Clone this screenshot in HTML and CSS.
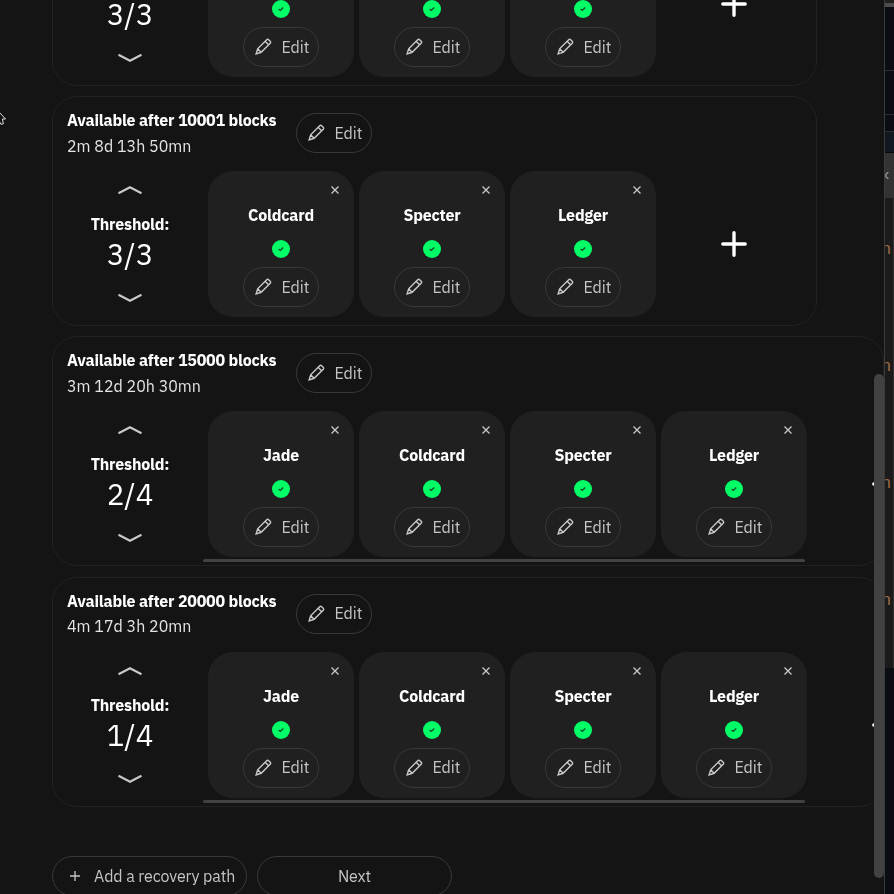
FILE: index.html
```
<!DOCTYPE html>
<html lang="en">
<head>
<meta charset="utf-8">
<title>Recovery paths</title>
<link rel="stylesheet" href="styles.css">
</head>
<body>
<svg class="defs" width="0" height="0">
  <symbol id="pencil" viewBox="0 0 18 18"><path d="M1.200 16.800 2.800 11.400 12.400 1.800q1-1 2 0l1.700 1.700q1 1 0 2L6.500 15.100ZM2.800 11.400 6.500 15.100M10.700 3.500l3.700 3.700"/></symbol>
  <symbol id="up" viewBox="0 0 26 10"><path d="M1.500 8.200 13 2.200 24.500 8.200"/></symbol>
  <symbol id="down" viewBox="0 0 26 10"><path d="M1.500 1.800 13 7.800 24.500 1.800"/></symbol>
  <symbol id="close" viewBox="0 0 10 10"><path d="M1.500 1.500 8.500 8.500M8.500 1.500 1.500 8.500"/></symbol>
  <symbol id="check" viewBox="0 0 18 18"><path d="M6.600 9 8.300 10.300 11.300 7.600"/></symbol>
  <symbol id="plus" viewBox="0 0 26 26"><path d="M13 1.800V24.200M1.800 13H24.200"/></symbol>
</svg>
<div class="screen">
  <main class="window">
    <div class="paths">
      <section class="path">
        <header class="head"></header>
        <div class="row">
          <div class="threshold"><svg></svg><b></b><span>3/3</span><svg><use href="#down"/></svg></div>
          <div class="keys">
            <article class="key"><h3></h3><svg class="ok"><use href="#check"/></svg><button class="btn"><svg><use href="#pencil"/></svg><span>Edit</span></button></article>
            <article class="key"><h3></h3><svg class="ok"><use href="#check"/></svg><button class="btn"><svg><use href="#pencil"/></svg><span>Edit</span></button></article>
            <article class="key"><h3></h3><svg class="ok"><use href="#check"/></svg><button class="btn"><svg><use href="#pencil"/></svg><span>Edit</span></button></article>
            <div class="add"><svg><use href="#plus"/></svg></div>
          </div>
        </div>
      </section>
      <section class="path">
        <header class="head"><div class="info"><h2>Available after 10001 blocks</h2><p>2m 8d 13h 50mn</p></div><button class="btn"><svg><use href="#pencil"/></svg><span>Edit</span></button></header>
        <div class="row">
          <div class="threshold"><svg><use href="#up"/></svg><b>Threshold:</b><span>3/3</span><svg><use href="#down"/></svg></div>
          <div class="keys">
            <article class="key"><svg class="close"><use href="#close"/></svg><h3>Coldcard</h3><svg class="ok"><use href="#check"/></svg><button class="btn"><svg><use href="#pencil"/></svg><span>Edit</span></button></article>
            <article class="key"><svg class="close"><use href="#close"/></svg><h3>Specter</h3><svg class="ok"><use href="#check"/></svg><button class="btn"><svg><use href="#pencil"/></svg><span>Edit</span></button></article>
            <article class="key"><svg class="close"><use href="#close"/></svg><h3>Ledger</h3><svg class="ok"><use href="#check"/></svg><button class="btn"><svg><use href="#pencil"/></svg><span>Edit</span></button></article>
            <div class="add"><svg><use href="#plus"/></svg></div>
          </div>
        </div>
      </section>
      <section class="path wide">
        <header class="head"><div class="info"><h2>Available after 15000 blocks</h2><p>3m 12d 20h 30mn</p></div><button class="btn"><svg><use href="#pencil"/></svg><span>Edit</span></button></header>
        <div class="row">
          <div class="threshold"><svg><use href="#up"/></svg><b>Threshold:</b><span>2/4</span><svg><use href="#down"/></svg></div>
          <div class="keys">
            <article class="key"><svg class="close"><use href="#close"/></svg><h3>Jade</h3><svg class="ok"><use href="#check"/></svg><button class="btn"><svg><use href="#pencil"/></svg><span>Edit</span></button></article>
            <article class="key"><svg class="close"><use href="#close"/></svg><h3>Coldcard</h3><svg class="ok"><use href="#check"/></svg><button class="btn"><svg><use href="#pencil"/></svg><span>Edit</span></button></article>
            <article class="key"><svg class="close"><use href="#close"/></svg><h3>Specter</h3><svg class="ok"><use href="#check"/></svg><button class="btn"><svg><use href="#pencil"/></svg><span>Edit</span></button></article>
            <article class="key"><svg class="close"><use href="#close"/></svg><h3>Ledger</h3><svg class="ok"><use href="#check"/></svg><button class="btn"><svg><use href="#pencil"/></svg><span>Edit</span></button></article>
            <div class="add"><svg><use href="#plus"/></svg></div>
          </div>
        </div>
        <div class="hscroll"></div>
      </section>
      <section class="path wide">
        <header class="head"><div class="info"><h2>Available after 20000 blocks</h2><p>4m 17d 3h 20mn</p></div><button class="btn"><svg><use href="#pencil"/></svg><span>Edit</span></button></header>
        <div class="row">
          <div class="threshold"><svg><use href="#up"/></svg><b>Threshold:</b><span>1/4</span><svg><use href="#down"/></svg></div>
          <div class="keys">
            <article class="key"><svg class="close"><use href="#close"/></svg><h3>Jade</h3><svg class="ok"><use href="#check"/></svg><button class="btn"><svg><use href="#pencil"/></svg><span>Edit</span></button></article>
            <article class="key"><svg class="close"><use href="#close"/></svg><h3>Coldcard</h3><svg class="ok"><use href="#check"/></svg><button class="btn"><svg><use href="#pencil"/></svg><span>Edit</span></button></article>
            <article class="key"><svg class="close"><use href="#close"/></svg><h3>Specter</h3><svg class="ok"><use href="#check"/></svg><button class="btn"><svg><use href="#pencil"/></svg><span>Edit</span></button></article>
            <article class="key"><svg class="close"><use href="#close"/></svg><h3>Ledger</h3><svg class="ok"><use href="#check"/></svg><button class="btn"><svg><use href="#pencil"/></svg><span>Edit</span></button></article>
            <div class="add"><svg><use href="#plus"/></svg></div>
          </div>
        </div>
        <div class="hscroll"></div>
      </section>
    </div>
    <footer class="actions">
      <button class="btn large"><svg class="small-plus"><use href="#close"/></svg><span>Add a recovery path</span></button>
      <button class="btn large next"><span>Next</span></button>
    </footer>
    <div class="vscroll"></div>
    <svg class="cursor" viewBox="0 0 6 16"><path d="M0 2 5.500 8H2.500L3.300 12.800 1 13.300-.5 10.500"/></svg>
  </main>
  <aside class="behind">
    <div class="edge"></div>
    <div class="pane p1"></div>
    <div class="pane p2"></div>
    <div class="pane p3"></div>
    <div class="pane p4"></div>
    <div class="tab"><svg viewBox="0 0 6 10"><path d="M4 1 1 3.500V6.500L4 9"/></svg></div>
    <div class="terminal"><span>n</span><span>n</span><span>n</span><span>n</span></div>
    <div class="pane last"></div>
  </aside>
</div>
</body>
</html>
```
FILE: styles.css
```
* { box-sizing: border-box; }
body { margin: 0; background: #141414; color: #fff; font-family: "IBM Plex Sans", "Noto Sans", sans-serif; font-size: 16px; overflow: hidden; }
h2, h3, p { margin: 0; font-size: 16px; white-space: nowrap; }
svg { display: block; flex: none; fill: none; stroke: #c8c8c8; stroke-width: 1.5; overflow: visible; }
.defs { position: absolute; }
.screen { display: flex; width: 894px; height: 894px; overflow: hidden; }
.window { position: relative; width: 885px; height: 894px; flex: none; overflow: hidden; border-right: 1px solid #3b3b3b; }
.paths { display: flex; flex-direction: column; gap: 10.200px; margin: -144px 0 0 52px; will-change: transform; }
.path { width: 765px; height: 230px; flex: none; border: 1px solid #222; border-radius: 25px; padding: 14px 0 0 14px; }
.path.wide { width: 832px; }
.head { display: flex; gap: 20px; height: 60px; }
.info { width: 209px; margin-top: -1px; }
.info h2, .info p { height: 25.500px; line-height: 20px; }
.info h2 { letter-spacing: -.2px; }
.info p { color: #e4e4e4; }
.btn { display: flex; align-items: center; width: 76px; height: 40px; border: 1px solid #393939; border-radius: 20px; padding: 0 0 0 10.500px; background: transparent; color: #c4c4c4; font: 16px "IBM Plex Sans", "Noto Sans", sans-serif; white-space: nowrap; }
.btn svg { width: 17px; height: 17px; stroke-width: 1.500; margin: 0 10px 1px 0; }
.btn span { letter-spacing: -.1px; margin-top: -1px; }
.head .btn { margin-top: 2px; }
.row { display: flex; }
.threshold { width: 126px; height: 146px; display: flex; flex-direction: column; align-items: center; padding-top: 14px; flex: none; }
.threshold svg { width: 26px; height: 10px; stroke-width: 2.100; }
.threshold b { height: 20px; font-size: 16px; line-height: 20px; letter-spacing: -.2px; margin-top: 19px; }
.threshold span { font-size: 29.500px; line-height: 36px; margin: 2px 0 21px; }
.keys { display: flex; gap: 5px; margin-left: 15px; }
.key { position: relative; width: 146px; height: 146px; flex: none; background: #202020; border-radius: 25px; display: flex; flex-direction: column; align-items: center; padding-top: 34px; }
.key h3 { height: 20px; line-height: 20px; letter-spacing: -.2px; }
.key .close { position: absolute; top: 14px; right: 14.500px; width: 10px; height: 10px; stroke-width: 1.300; }
.ok { width: 18px; height: 18px; margin: 15px 0 9px; background: #00ff66; border-radius: 9px; stroke: #134f2b; stroke-width: 1.300; }
.add { width: 146px; height: 146px; display: grid; place-items: center; flex: none; }
.add svg { width: 26px; height: 26px; stroke: #fff; stroke-width: 3.400; stroke-linecap: round; }
.hscroll { width: 602px; height: 3px; margin: 2px 0 0 136px; border-radius: 2px; background: #424242; }
.actions { display: flex; gap: 10px; margin: 49.500px 0 0 52px; will-change: transform; }
.large { width: 195px; padding-left: 17px; }
.large .small-plus { width: 10px; height: 10px; margin-right: 14px; transform: rotate(45deg); stroke-width: 1.300; }
.next { justify-content: center; padding: 0; }
.vscroll { position: absolute; left: 874px; top: 374px; width: 10px; height: 504px; border-radius: 5px; background: #424242; }
.cursor { position: absolute; left: 0; top: 111px; width: 6px; height: 16px; stroke: #ddd; stroke-width: 1; }
.behind { width: 9px; display: flex; flex-direction: column; background: #1b1b1b; overflow: hidden; }
.behind > div { flex: none; }
.edge { height: 7px; border-top: 3px solid #202020; background: #4c4c4c; }
.pane { background: #0a0e14; }
.p1 { height: 64px; border-bottom: 1px solid #292d33; }
.p2 { height: 44px; border-bottom: 1px solid #292d33; }
.p3 { height: 17px; border-bottom: 1px solid #292d33; }
.p4 { height: 21px; background: #121820; border-bottom: 1px solid #080808; }
.tab { height: 45px; background: #333; padding-top: 18px; }
.tab svg { width: 5px; height: 9px; stroke: #999; }
.terminal { height: 470px; border-right: 1px solid #303030; padding-top: 42px; overflow: hidden; }
.terminal span { display: block; height: 117px; margin-left: -4px; color: #9a6a49; font: 17px/20px "Liberation Mono", monospace; }
.last { height: 226px; }
```
